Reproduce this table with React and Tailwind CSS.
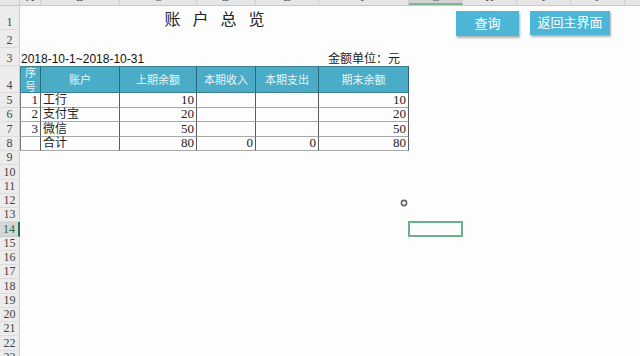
import React from 'react';

const W = ['w-[21px]', 'w-[79px]', 'w-[77px]', 'w-[59px]', 'w-[63px]', 'w-[90px]', 'w-[54px]', 'w-[54px]', 'w-[54px]', 'w-[54px]', 'w-[60px]'];
const LETTERS = ['A', 'B', 'C', 'D', 'E', 'F', 'G', 'H', 'I', 'J', 'K'];

const serif = "font-['Liberation_Serif','Noto_Sans_CJK_SC',serif]";

const rows = [
  { no: '1', name: '工行', start: '10', inc: '', out: '', end: '10' },
  { no: '2', name: '支付宝', start: '20', inc: '', out: '', end: '20' },
  { no: '3', name: '微信', start: '50', inc: '', out: '', end: '50' },
  { no: '', name: '合计', start: '80', inc: '0', out: '0', end: '80' },
];

function RowHead({ n, active }) {
  return (
    <div
      className={`w-[20px] shrink-0 flex items-end justify-center border-b border-r pb-[1px] text-[12px] leading-none ${serif} ${
        active
          ? 'bg-[#d6d6d6] text-[#217346] border-b-[#c9c9c9] border-r-[#217346] border-r-2'
          : 'bg-[#ececec] text-[#444] border-b-[#dcdcdc] border-r-[#cfcfcf]'
      }`}
    >
      {n}
    </div>
  );
}

function Row({ n, h, active, children }) {
  return (
    <div className={`flex ${h}`}>
      <RowHead n={n} active={active} />
      {children}
    </div>
  );
}

function HeadCell({ w, children, first }) {
  return (
    <div
      className={`${w} shrink-0 flex items-center justify-center bg-[#4aacc6] text-[#e8f6fa] text-[11px] leading-[14px] text-center border-t border-b border-r border-t-[#3d7f90] border-b-[#3d7f90] border-r-[#2d6675] ${
        first ? 'border-l border-l-[#3d7f90]' : ''
      } ${serif}`}
    >
      {children}
    </div>
  );
}

function BodyCell({ w, children, align = 'right', first }) {
  return (
    <div
      className={`${w} shrink-0 flex items-end px-[2px] pb-[0px] text-[13px] leading-[14px] text-[#222] border-b border-r border-b-[#a8a8a8] border-r-[#5c5c5c] ${
        align === 'right' ? 'justify-end' : 'justify-start'
      } ${first ? 'border-l border-l-[#7a7a7a]' : ''} ${serif}`}
    >
      {children}
    </div>
  );
}

export default function App() {
  const emptyRows = [];
  for (let i = 9; i <= 23; i++) emptyRows.push(i);

  return (
    <div className="relative w-[640px] h-[356px] overflow-hidden bg-[#fdfdfd]">
      {/* column header strip, mostly scrolled off */}
      <div className="flex h-[6px] overflow-hidden bg-[#e6e6e6] border-b border-[#c8c8c8]">
        <div className="w-[20px] shrink-0 border-r border-[#cfcfcf] bg-[#e6e6e6]" />
        {W.map((w, i) => (
          <div
            key={i}
            className={`${w} shrink-0 relative border-r border-[#cfcfcf] ${
              i === 6 ? 'bg-[#d3d3d3] border-b-2 border-b-[#7fb595]' : ''
            }`}
          >
            <span
              className={`absolute left-0 right-0 top-[-9px] text-center text-[12px] leading-none text-[#555] ${serif}`}
            >
              {LETTERS[i]}
            </span>
          </div>
        ))}
      </div>

      {/* row 1: title */}
      <Row n="1" h="h-[24px]">
        <div className="w-[389px] shrink-0 flex items-center justify-center pt-[4px] pl-[12px]">
          <span className={`text-[16px] tracking-[12px] text-[#222] ${serif}`}>账户总览</span>
        </div>
      </Row>

      <Row n="2" h="h-[18px]" />

      {/* row 3 */}
      <Row n="3" h="h-[18px]">
        <div className="w-[389px] shrink-0 flex items-end justify-between pl-[1px] pr-[9px]">
          <span className="font-['Liberation_Sans',sans-serif] text-[12px] leading-[14px] text-[#111]">
            2018-10-1~2018-10-31
          </span>
          <span className={`text-[12px] leading-[14px] text-[#222] ${serif}`}>金额单位：元</span>
        </div>
      </Row>

      {/* row 4: table header */}
      <Row n="4" h="h-[27px]">
        <HeadCell w={W[0]} first>
          序<br />号
        </HeadCell>
        <HeadCell w={W[1]}>账户</HeadCell>
        <HeadCell w={W[2]}>上期余额</HeadCell>
        <HeadCell w={W[3]}>本期收入</HeadCell>
        <HeadCell w={W[4]}>本期支出</HeadCell>
        <HeadCell w={W[5]}>期末余额</HeadCell>
      </Row>

      {rows.map((r, i) => (
        <Row key={i} n={String(i + 5)} h="h-[14.5px]">
          <BodyCell w={W[0]} first>{r.no}</BodyCell>
          <BodyCell w={W[1]} align="left">
            <span className="text-[12px]">{r.name}</span>
          </BodyCell>
          <BodyCell w={W[2]}>{r.start}</BodyCell>
          <BodyCell w={W[3]}>{r.inc}</BodyCell>
          <BodyCell w={W[4]}>{r.out}</BodyCell>
          <BodyCell w={W[5]}>{r.end}</BodyCell>
        </Row>
      ))}

      {emptyRows.map((n) => (
        <Row key={n} n={String(n)} h="h-[14.25px]" active={n === 14}>
          {n === 14 ? (
            <>
              <div className="w-[388px] shrink-0" />
              <div className="w-[55px] shrink-0 border-2 border-[#6fae8b] -mt-[1px]" />
            </>
          ) : null}
        </Row>
      ))}

      {/* buttons drawn over the sheet */}
      <div
        className={`absolute left-[456px] top-[11px] w-[63px] h-[25px] flex items-center justify-center bg-[#4db5d5] text-white text-[13px] shadow-[1px_2px_2px_rgba(0,0,0,0.3)] ${serif}`}
      >
        查询
      </div>
      <div
        className={`absolute left-[530px] top-[11px] w-[80px] h-[24px] flex items-center justify-center bg-[#4db5d5] text-white text-[13px] shadow-[1px_2px_2px_rgba(0,0,0,0.3)] ${serif}`}
      >
        返回主界面
      </div>

      {/* mouse pointer */}
      <svg className="absolute left-[400px] top-[199px]" width="8" height="8" viewBox="0 0 8 8">
        <circle cx="4" cy="4" r="2.6" fill="#fff" stroke="#666" strokeWidth="1.6" />
      </svg>
    </div>
  );
}
